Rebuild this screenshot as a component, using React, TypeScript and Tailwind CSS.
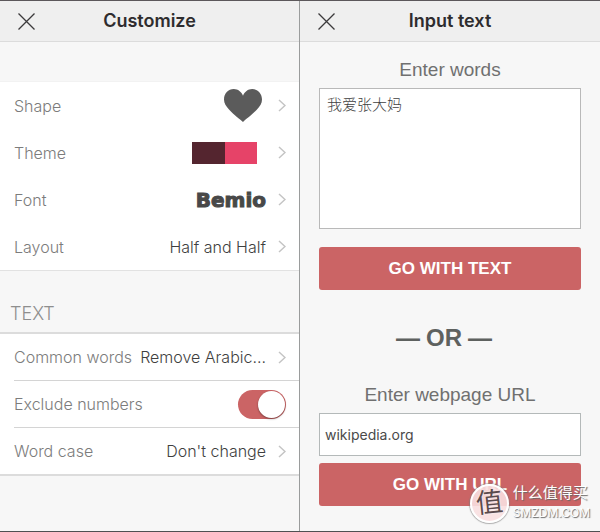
import { useState } from 'react';
import type { ReactNode } from 'react';

const UI = "font-['Inter','Noto_Sans_CJK_SC',sans-serif]";
const HELVETICA = "font-['Liberation_Sans',sans-serif]";

function Header({ title }: { title: string }) {
  return (
    <header className="relative flex h-[41px] items-center justify-center border-b border-[#dcdcdc] bg-[#efefef]">
      <button aria-label="Close" className="absolute left-[18px]">
        <svg width="17" height="17" viewBox="0 0 17 17" fill="none" stroke="#3c3a3c" strokeWidth="1.3">
          <path d="M0.5 0.5 L16.5 16.5 M16.5 0.5 L0.5 16.5" />
        </svg>
      </button>
      <h1 className="text-[18px] leading-6 font-semibold text-[#2e2c2e]">{title}</h1>
    </header>
  );
}

function Chevron() {
  return (
    <svg className="ml-3 shrink-0" width="8" height="13" viewBox="0 0 8 13" fill="none" stroke="#c4c4c4" strokeWidth="1.5">
      <path d="M1 1 L7 6.5 L1 12" />
    </svg>
  );
}

interface RowProps {
  label: string;
  children: ReactNode;
}

function Row({ label, children }: RowProps) {
  return (
    <button className="flex h-full w-full items-center justify-between pr-[13px] text-left whitespace-nowrap">
      <span className="font-light text-[#7c7c7c]">{label}</span>
      <span className="flex items-center text-[#3f3f3f]">
        {children}
        <Chevron />
      </span>
    </button>
  );
}

function Customize() {
  const [exclude, setExclude] = useState(true);

  return (
    <section className="border-r border-[#9a9c9c] bg-[#f7f7f7]">
      <Header title="Customize" />
      <div className="mt-[39px] grid auto-rows-[47px] border-y border-[#e2e2e2] border-t-[#f2f2f2] bg-white pl-[14px] text-[16px] leading-5">
        <Row label="Shape">
          <svg className="mr-1" width="38" height="33" viewBox="0 0 38 33" fill="#5b5b5b">
            <path d="M19 33 C16.5 30.5 10 26 5 20.5 C2 17 0 14.5 0 10.5 C0 4.5 4.2 0 9.8 0 C14 0 17.5 2.8 19 6.8 C20.5 2.8 24 0 28.2 0 C33.8 0 38 4.5 38 10.5 C38 14.5 36 17 33 20.5 C28 26 21.5 30.5 19 33 Z" />
          </svg>
        </Row>
        <Row label="Theme">
          <span className="mr-[9px] flex h-[22px] w-[65px]">
            <span className="flex-1 bg-[#54252f]" />
            <span className="flex-1 bg-[#e64368]" />
          </span>
        </Row>
        <Row label="Font">
          <span className="font-['DejaVu_Sans',sans-serif] text-[20px] font-bold text-[#484848] [-webkit-text-stroke:1px_#484848]">
            Bemio
          </span>
        </Row>
        <Row label="Layout">
          <span className="font-light">Half and Half</span>
        </Row>
      </div>

      <h2 className="flex h-[61px] items-end px-[10px] pb-[6px] text-[18px] leading-6 font-light text-[#8e8e8e]">TEXT</h2>

      <div className="border-y-2 border-[#dcdcdc] bg-white pl-[14px] text-[16px] leading-5">
        <div className="grid auto-rows-[46px] gap-px bg-[#d4d4d4] *:bg-white">
          <Row label="Common words">
            <span className="font-light">Remove Arabic...</span>
          </Row>
          <label className="flex items-center justify-between pr-[13px]">
            <span className="font-light text-[#7c7c7c]">Exclude numbers</span>
            <input
              type="checkbox"
              checked={exclude}
              onChange={(e) => setExclude(e.target.checked)}
              className="h-[29px] w-12 appearance-none rounded-full bg-[#d8d8d8] p-px before:block before:size-[27px] before:rounded-full before:bg-white before:shadow-[0_1px_2px_#00000066] checked:bg-[#cb6465] checked:pl-5"
            />
          </label>
          <Row label="Word case">
            <span className="font-light">Don't change</span>
          </Row>
        </div>
      </div>
    </section>
  );
}

function GoButton({ children }: { children: ReactNode }) {
  return (
    <button className={`${HELVETICA} h-[43px] w-full rounded-[3px] bg-[#cb6465] text-[17px] leading-5 font-bold text-white`}>
      {children}
    </button>
  );
}

function InputText() {
  const [words, setWords] = useState('我爱张大妈');
  const [url, setUrl] = useState('wikipedia.org');

  return (
    <section className="bg-[#f7f7f7]">
      <Header title="Input text" />
      <div className="px-[19px] pt-4">
        <label htmlFor="words" className={`${HELVETICA} mb-[6px] block text-center text-[19px] leading-6 text-[#707070]`}>
          Enter words
        </label>
        <textarea
          id="words"
          value={words}
          onChange={(e) => setWords(e.target.value)}
          className="block h-[141px] w-full resize-none border border-[#b9b9b9] bg-white px-[7px] py-[6px] text-[15px] leading-5 font-light text-[#3f3f3f] outline-none"
        />
        <div className="mt-[18px]">
          <GoButton>GO WITH TEXT</GoButton>
        </div>

        <p className={`${HELVETICA} mt-[33px] mb-[30px] flex items-center justify-center gap-[6px] pr-3 text-[24px] leading-[30px] font-bold text-[#5e615f]`}>
          <span>—</span>
          <span>OR</span>
          <span>—</span>
        </p>

        <label htmlFor="url" className={`${HELVETICA} mb-[6px] block text-center text-[19px] leading-6 text-[#707070]`}>
          Enter webpage URL
        </label>
        <input
          id="url"
          type="text"
          value={url}
          onChange={(e) => setUrl(e.target.value)}
          className="mb-[7px] block h-[43px] w-full border border-[#b4b9b9] bg-white px-[5px] text-[14px] leading-5 text-[#4a4a4a] outline-none"
        />
        <GoButton>GO WITH URL</GoButton>
      </div>
    </section>
  );
}

// site stamp over the bottom right corner
function Stamp() {
  return (
    <div className="pointer-events-none absolute right-[10px] bottom-2 flex items-center gap-1 text-white">
      <div className="flex size-[39px] items-center justify-center rounded-full border-2 border-white bg-[#f8dfe0]/90 shadow-[0_0_1px_1px_#7f7f7f99]">
        <span className="-rotate-6 text-[27px] leading-8 text-[#5b4a4c] [text-shadow:0_0_2px_white]">值</span>
      </div>
      <div className="whitespace-nowrap [text-shadow:1px_1px_1px_#666666]">
        <div className="text-[15px] leading-5">什么值得买</div>
        <div className="text-[12px] leading-5">SMZDM.COM</div>
      </div>
    </div>
  );
}

export default function App() {
  return (
    <main className={`${UI} relative grid min-h-screen grid-cols-2 border-y border-t-[#5c585b] border-b-[#4e5052]`}>
      <Customize />
      <InputText />
      <Stamp />
    </main>
  );
}
